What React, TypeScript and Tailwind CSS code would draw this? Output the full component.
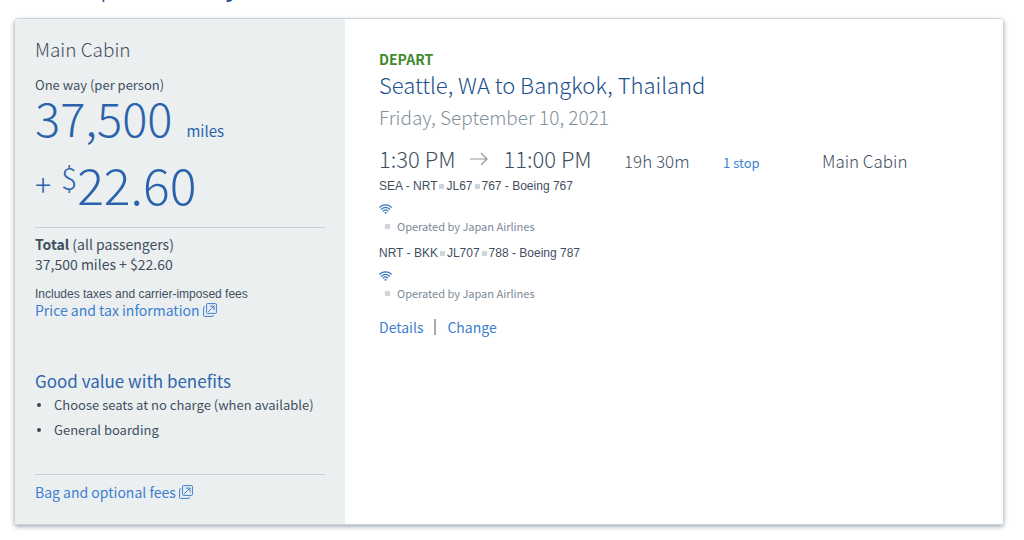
import type { ReactNode } from 'react';

function NewWindowIcon() {
  return (
    <svg className="h-3.5 w-3.5" viewBox="0 0 14 14" fill="none" stroke="currentColor" aria-hidden="true">
      <rect x="3.6" y="0.6" width="9.8" height="9.8" rx="0.8" />
      <path d="M2.2 3.6H1.4a.8.8 0 0 0-.8.8v8.2a.8.8 0 0 0 .8.8h8.2a.8.8 0 0 0 .8-.8v-.8" />
      <path d="M5.2 8.8 10.9 3.2M6.8 3.1H11v4.2" />
    </svg>
  );
}

function WifiIcon() {
  return (
    <svg className="block h-2.5 w-[13px]" viewBox="0 0 13 10" fill="none" stroke="#3b76c0" strokeLinecap="round" role="img" aria-label="Wi-Fi">
      <path d="M0.6 3.2C3.9.2 9.1.2 12.4 3.2" strokeWidth="1.2" />
      <path d="M2.3 5.2C4.8 2.9 8.2 2.9 10.7 5.2" strokeWidth="1.2" />
      <path d="M4.1 7.1C5.6 5.7 7.4 5.7 8.9 7.1" strokeWidth="1.2" />
      <circle cx="6.5" cy="8.8" r="1" fill="#3b76c0" stroke="none" />
    </svg>
  );
}

function ArrowIcon() {
  return (
    <svg className="h-3.5 w-[18px]" viewBox="0 0 18 14" fill="none" stroke="#8d979f" strokeWidth="1.2" aria-hidden="true">
      <path d="M0 8H17M11 2 17 8 11 14" />
    </svg>
  );
}

function Square() {
  return <span className="inline-block h-[5px] w-[5px] shrink-0 bg-[#cfd6db]" />;
}

function TextLink({ children }: { children: ReactNode }) {
  return (
    <a href="#" className="text-sm leading-5 text-[#3d7fd0] hover:underline">
      {children}
    </a>
  );
}

type Leg = { route: string; flight: string; aircraft: string; operator: string };

const legs: Leg[] = [
  { route: 'SEA - NRT', flight: 'JL67', aircraft: '767 - Boeing 767', operator: 'Japan Airlines' },
  { route: 'NRT - BKK', flight: 'JL707', aircraft: '788 - Boeing 787', operator: 'Japan Airlines' },
];

const benefits = ['Choose seats at no charge (when available)', 'General boarding'];

function FareSummary() {
  return (
    <aside className="w-[330px] shrink-0 bg-[#ebeff0] px-5 pt-[18px] pb-[22px]">
      <h2 className="text-[19px] leading-6 font-light">Main Cabin</h2>
      <p className="mt-[15px] text-[13px] leading-[18px]">One way (per person)</p>
      <p className="flex items-baseline gap-3.5 text-[47px] leading-[46px] font-light text-[#2a63ab]">
        37,500 <span className="text-[15px] leading-5 font-normal">miles</span>
      </p>
      <p className="mt-[18px] flex items-center text-[50px] leading-[48px] font-light text-[#2a63ab]">
        <span className="text-[30px]">+</span>
        <span className="ml-2.5 flex items-start">
          <span className="text-[30px] leading-9">$</span>22.60
        </span>
      </p>
      <hr className="mt-5 border-[#c8d0d8]" />
      <p className="mt-1.5 text-sm leading-5">
        <b className="font-bold">Total</b> (all passengers)
      </p>
      <p className="text-sm leading-5">37,500 miles + $22.60</p>
      <p className="mt-3.5 font-['Liberation_Sans',sans-serif] text-xs leading-3">
        Includes taxes and carrier-imposed fees
      </p>
      <div className="flex items-center gap-[3px] text-[#3d7fd0]">
        <TextLink>Price and tax information</TextLink>
        <NewWindowIcon />
      </div>
      <h3 className="mt-[49px] text-[17px] leading-6 text-[#2f66ad]">Good value with benefits</h3>
      <ul className="mt-0.5 flex flex-col gap-[5px] text-[13px] leading-5">
        {benefits.map((benefit) => (
          <li key={benefit} className="flex items-center">
            <span className="ml-0.5 h-1 w-1 rounded-full bg-[#36495a]" />
            <span className="ml-[13px]">{benefit}</span>
          </li>
        ))}
      </ul>
      <hr className="mt-[34px] border-[#c8d0d8]" />
      <div className="mt-[7px] flex items-center gap-[3px] text-[#3d7fd0]">
        <TextLink>Bag and optional fees</TextLink>
        <NewWindowIcon />
      </div>
    </aside>
  );
}

function FlightLeg({ leg }: { leg: Leg }) {
  return (
    <li>
      <p className="flex items-center gap-0.5 font-['Liberation_Sans',sans-serif] text-xs leading-4">
        {leg.route} <Square /> {leg.flight} <Square /> {leg.aircraft}
      </p>
      <div className="mt-2.5">
        <WifiIcon />
      </div>
      <p className="mt-1 ml-1.5 flex items-center gap-[7px] text-[11px] leading-4 text-[#7b8a97]">
        <Square /> Operated by {leg.operator}
      </p>
    </li>
  );
}

function FlightDetails() {
  return (
    <section className="min-w-0 flex-1 bg-white pt-[30px] pr-5 pl-[34px]">
      <p className="text-sm leading-5 font-bold text-[#3e8a2c]">DEPART</p>
      <h2 className="mt-px text-[22px] leading-7 font-light text-[#21508e]">Seattle, WA to Bangkok, Thailand</h2>
      <p className="mt-[5px] text-[19px] leading-7 font-light text-[#82909b]">Friday, September 10, 2021</p>
      <div className="mt-[15px] grid grid-cols-[245px_99px_99px_1fr] items-baseline text-[17px] leading-6 font-light">
        <div className="flex items-center gap-[15px] text-[22px]">
          <span>1:30 PM</span>
          <ArrowIcon />
          <span>11:00 PM</span>
        </div>
        <span>19h 30m</span>
        <a href="#" className="text-[13px] font-normal text-[#3d7fd0] hover:underline">1 stop</a>
        <span>Main Cabin</span>
      </div>
      <ul className="mt-[3px] flex flex-col gap-[11px]">
        {legs.map((leg) => (
          <FlightLeg key={leg.flight} leg={leg} />
        ))}
      </ul>
      <div className="mt-4 flex items-center gap-[11px]">
        <TextLink>Details</TextLink>
        <span className="h-4 w-0.5 bg-[#a3acb3]" />
        <TextLink>Change</TextLink>
      </div>
    </section>
  );
}

export default function App() {
  return (
    <main className="bg-white pb-4 font-['Noto_Sans_CJK_SC',sans-serif] text-[#3f4f5f]">
      <header className="flex h-[18px] items-start overflow-hidden px-[17px]">
        <h1 className="-mt-[33px] text-[26px] leading-9 font-light text-[#21508e]">
          Your trip <span className="font-medium">summary</span>
        </h1>
      </header>
      <article className="mr-5 ml-3.5 flex overflow-hidden rounded border border-[#cbd4da] shadow-[0_2px_4px_rgba(60,80,100,0.45)]">
        <FareSummary />
        <FlightDetails />
      </article>
    </main>
  );
}
